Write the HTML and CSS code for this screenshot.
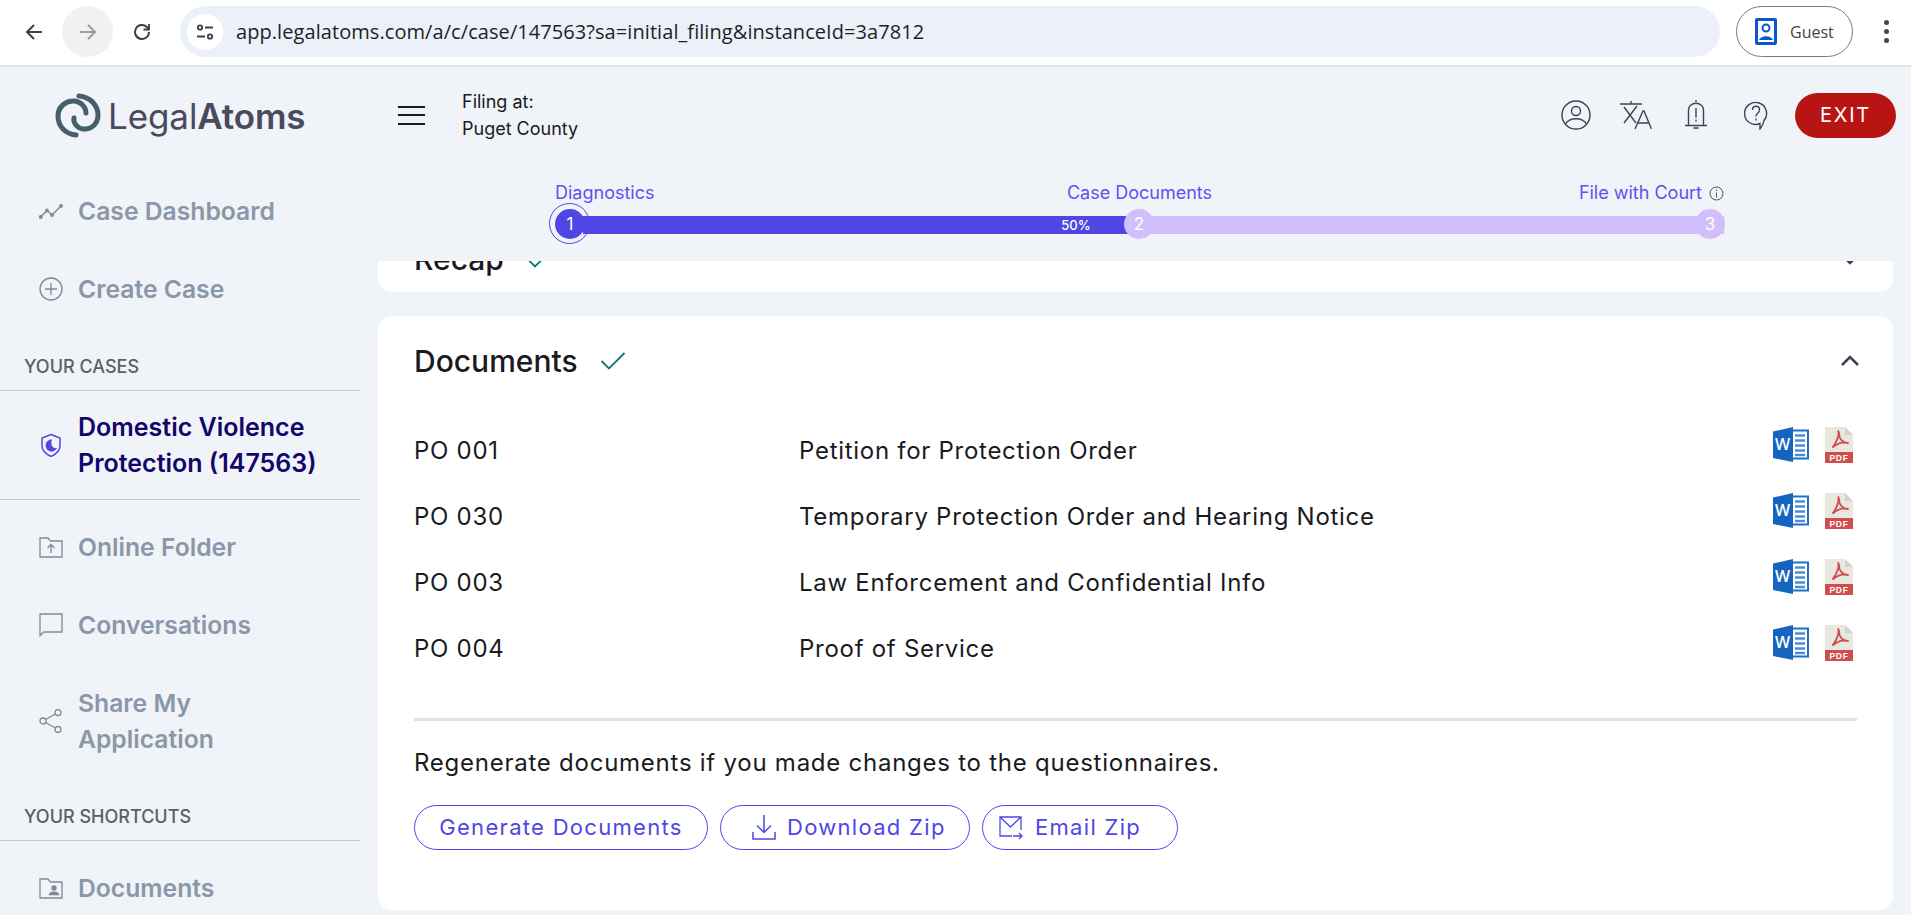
FILE: index.html
```html
<!DOCTYPE html>
<html>
<head>
	<meta charset="utf-8">
	<title>LegalAtoms</title>
	<link rel="stylesheet" href="styles.css">
</head>
<body>
	<div class="chrome">
		<button class="nav-btn">
			<svg width="22" height="22" viewBox="0 0 22 22" fill="none" stroke="#3c4043" stroke-width="2"><path d="M19 11H4M11 4l-7 7 7 7"/></svg>
		</button>
		<button class="nav-btn nav-off">
			<svg width="22" height="22" viewBox="0 0 22 22" fill="none" stroke="#9b9ea2" stroke-width="2"><path d="M3 11h15M11 4l7 7-7 7"/></svg>
		</button>
		<button class="nav-btn">
			<svg width="22" height="22" viewBox="0 0 22 22" fill="none" stroke="#3c4043" stroke-width="2"><path d="M18 11a7 7 0 1 1-2.200-5.100L18 8"/><path d="M18 3v5.500h-5.500" stroke-width="1.800"/></svg>
		</button>
		<div class="address">
			<span class="tune">
				<svg width="20" height="20" viewBox="0 0 20 20" fill="none" stroke="#3c4043" stroke-width="1.800"><circle cx="5" cy="5.500" r="2.200"/><path d="M10 5.500h8M2 14.500h8"/><circle cx="15" cy="14.500" r="2.200"/></svg>
			</span>
			<span class="url">app.legalatoms.com/a/c/case/147563?sa=initial_filing&amp;instanceId=3a7812</span>
		</div>
		<div class="guest">
			<svg width="22" height="27" viewBox="0 0 22 27"><rect width="22" height="27" rx="2" fill="#0b57d0"/><rect x="3" y="3" width="16" height="21" fill="#fff"/><circle cx="11" cy="10" r="3.500" fill="none" stroke="#0b57d0" stroke-width="2"/><path d="M4 22c2-5 12-5 14 0z" fill="#0b57d0"/></svg>
			<span>Guest</span>
		</div>
		<div class="dots"><i></i><i></i><i></i></div>
	</div>

	<div class="app">
		<aside class="sidebar">
			<div class="logo">
				<svg width="46" height="46" viewBox="0 0 46 46" fill="none" stroke="#45606b" stroke-width="5" stroke-linecap="round">
					<path d="M24 3c11 1 19 9 19 19 0 9-7 15-15 14-6-1-10-6-9-11"/>
					<path d="M21 42C10 41 3 33 3 23 3 14 11 7 20 8c6 1 11 6 11 12"/>
				</svg>
				<span class="logo-text">Legal<b>Atoms</b></span>
			</div>

			<a class="nav-item">
				<svg width="24" height="24" viewBox="0 0 24 24" fill="none" stroke="#7f8a99" stroke-width="1.500"><path d="M1.500 18 8 11.500l5 4.500 9-9"/><circle cx="1.800" cy="18" r="1.200" fill="#7f8a99"/><circle cx="8" cy="11.500" r="1.200" fill="#7f8a99"/><circle cx="13" cy="16" r="1.200" fill="#7f8a99"/><circle cx="22" cy="7" r="1.200" fill="#7f8a99"/></svg>
				<span>Case Dashboard</span>
			</a>
			<a class="nav-item">
				<svg width="24" height="24" viewBox="0 0 24 24" fill="none" stroke="#7f8a99" stroke-width="1.300"><circle cx="12" cy="12" r="11"/><path d="M12 6v12M6 12h12"/></svg>
				<span>Create Case</span>
			</a>

			<div class="nav-head">YOUR CASES</div>
			<a class="nav-item nav-active">
				<svg width="24" height="24" viewBox="0 0 24 24" fill="none" stroke="#4f46e5" stroke-width="1.500"><path d="M12 1.500 21 5v8c0 5-4 8-9 10.500C7 21 3 18 3 13V5z"/><path d="M13 6.500a6 6 0 1 0 5 8.500c-4 1-7-3-5-8.500z" fill="#4f46e5" stroke="none"/></svg>
				<span>Domestic Violence Protection (147563)</span>
			</a>

			<a class="nav-item nav-first">
				<svg width="24" height="24" viewBox="0 0 24 24" fill="none" stroke="#7f8a99" stroke-width="1.300"><path d="M1 3h8l2.500 3H23v16H1z"/><path d="M12 18v-8M8.500 13 12 9.500l3.500 3.500"/></svg>
				<span>Online Folder</span>
			</a>
			<a class="nav-item">
				<svg width="24" height="24" viewBox="0 0 24 24" fill="none" stroke="#7f8a99" stroke-width="1.300"><path d="M1 1h22v18H5l-4 3.500z"/></svg>
				<span>Conversations</span>
			</a>
			<a class="nav-item nav-tall">
				<svg width="24" height="24" viewBox="0 0 24 24" fill="none" stroke="#7f8a99" stroke-width="1.300"><circle cx="4" cy="12" r="3"/><circle cx="19" cy="3.500" r="3"/><circle cx="19" cy="20.500" r="3"/><path d="m6.600 10.500 9.800-5.500M6.600 13.500l9.800 5.500"/></svg>
				<span>Share My Application</span>
			</a>

			<div class="nav-head">YOUR SHORTCUTS</div>
			<a class="nav-item nav-first">
				<svg width="24" height="24" viewBox="0 0 24 24" fill="none" stroke="#7f8a99" stroke-width="1.300"><path d="M1 3h8l2.500 3H23v16H1z"/><circle cx="15" cy="12" r="2" fill="#7f8a99"/><path d="M10.500 18.500c1-3 8-3 9 0z" fill="#7f8a99"/></svg>
				<span>Documents</span>
			</a>
		</aside>

		<main class="content">
			<header class="topbar">
				<div class="burger"><i></i><i></i><i></i></div>
				<div class="filing">Filing at:<br>Puget County</div>
				<div class="top-icons">
					<svg width="30" height="30" viewBox="0 0 30 30" fill="none" stroke="#3f4254" stroke-width="1.400"><circle cx="15" cy="15" r="14"/><circle cx="15" cy="11" r="4.500"/><path d="M4.500 24c4-7 17-7 21 0"/></svg>
					<svg width="32" height="28" viewBox="0 0 32 28" fill="none" stroke="#3f4254" stroke-width="1.400"><path d="M0 3h22M11 0v3M4 6l12 16M17 5 4 22"/><path d="M15 28l8-18h1l7.500 18M18 22h11"/></svg>
					<svg width="24" height="30" viewBox="0 0 24 30" fill="none" stroke="#3f4254" stroke-width="1.400"><path d="M1 25.500h22M4.500 25.500V10c0-9 15-9 15 0v15.500"/><path d="M12 8v9.500M12 19.500v2" /><path d="M9.500 28h5M12 0v2"/></svg>
					<svg width="24" height="29" viewBox="0 0 24 29" fill="none" stroke="#3f4254" stroke-width="1.400"><path d="M16 28v-5.500A11 11 0 1 1 20 19.500c-.5 3-2 6-4 8.500z"/><path d="M8.500 9c0-5 7-5 7 0 0 3-3.500 3-3.500 6.500M12 17.500v2"/></svg>
				</div>
				<button class="exit">EXIT</button>
			</header>

			<div class="stepper">
				<div class="step-labels">
					<span>Diagnostics</span>
					<span class="step-mid">Case Documents</span>
					<span class="step-end">File with Court
						<svg width="15" height="15" viewBox="0 0 15 15" fill="none" stroke="#555" stroke-width="1"><circle cx="7.500" cy="7.500" r="6.500"/><path d="M7.500 6.500v5M7.500 3.500v1.500"/></svg>
					</span>
				</div>
				<div class="bar">
					<div class="ring"></div>
					<div class="track"><div class="fill" style="width:49.4%">50%</div></div>
					<div class="dot dot-one">1</div>
					<div class="dot dot-two">2</div>
					<div class="dot dot-three">3</div>
				</div>
			</div>

			<div class="pane">
				<section class="card card-recap">
					<div class="card-head">
						<h2>Recap</h2>
						<svg class="check" width="26" height="20" viewBox="0 0 26 20" fill="none" stroke="#0b7a75" stroke-width="1.800"><path d="M1.500 10 9 17.500 24.500 2"/></svg>
						<svg class="chevron" width="20" height="12" viewBox="0 0 20 12" fill="none" stroke="#3f4254" stroke-width="2.600"><path d="M2 2l8 8 8-8"/></svg>
					</div>
				</section>

				<section class="card">
					<div class="card-head">
						<h2>Documents</h2>
						<svg class="check" width="26" height="20" viewBox="0 0 26 20" fill="none" stroke="#0b7a75" stroke-width="1.800"><path d="M1.500 10 9 17.500 24.500 2"/></svg>
						<svg class="chevron" width="20" height="12" viewBox="0 0 20 12" fill="none" stroke="#3f4254" stroke-width="2.600"><path d="M2 10l8-8 8 8"/></svg>
					</div>

					<div class="doc-row">
						<span>PO 001</span>
						<span>Petition for Protection Order</span>
						<span class="doc-icons">
							<svg class="ic-word" viewBox="0 0 36 35"><rect x="12" y="3.500" width="23" height="28" fill="#fff" stroke="#1f6fc4" stroke-width="2"/><path d="M22 8.500h10M22 13.500h10M22 18.500h10M22 23.500h10M22 28h10" stroke="#4a8fd6" stroke-width="2.400"/><path d="M0 4.500 20 0v35L0 31z" fill="#1565c0"/><text x="10" y="23" text-anchor="middle" class="word-letter">W</text></svg>
							<svg class="ic-pdf" viewBox="0 0 28 36"><path d="M0 0h20l8 8v28H0z" fill="#e9e8e0"/><path d="M20 0l8 8h-8z" fill="#d4d3ca"/><path d="M0 25h28v11H0z" fill="#cf4d4d"/><path d="M13 3.500c1.500 3-.5 11-5.500 17 5-4 11-6 16-4.500-4 .5-8-3-9-6 0-2.500-.5-5-1.500-6.500z" fill="none" stroke="#cf4d4d" stroke-width="1.800"/><text x="14" y="34" text-anchor="middle" class="pdf-label">PDF</text></svg>
						</span>
					</div>
					<div class="doc-row">
						<span>PO 030</span>
						<span>Temporary Protection Order and Hearing Notice</span>
						<span class="doc-icons">
							<svg class="ic-word" viewBox="0 0 36 35"><rect x="12" y="3.500" width="23" height="28" fill="#fff" stroke="#1f6fc4" stroke-width="2"/><path d="M22 8.500h10M22 13.500h10M22 18.500h10M22 23.500h10M22 28h10" stroke="#4a8fd6" stroke-width="2.400"/><path d="M0 4.500 20 0v35L0 31z" fill="#1565c0"/><text x="10" y="23" text-anchor="middle" class="word-letter">W</text></svg>
							<svg class="ic-pdf" viewBox="0 0 28 36"><path d="M0 0h20l8 8v28H0z" fill="#e9e8e0"/><path d="M20 0l8 8h-8z" fill="#d4d3ca"/><path d="M0 25h28v11H0z" fill="#cf4d4d"/><path d="M13 3.500c1.500 3-.5 11-5.500 17 5-4 11-6 16-4.500-4 .5-8-3-9-6 0-2.500-.5-5-1.500-6.500z" fill="none" stroke="#cf4d4d" stroke-width="1.800"/><text x="14" y="34" text-anchor="middle" class="pdf-label">PDF</text></svg>
						</span>
					</div>
					<div class="doc-row">
						<span>PO 003</span>
						<span>Law Enforcement and Confidential Info</span>
						<span class="doc-icons">
							<svg class="ic-word" viewBox="0 0 36 35"><rect x="12" y="3.500" width="23" height="28" fill="#fff" stroke="#1f6fc4" stroke-width="2"/><path d="M22 8.500h10M22 13.500h10M22 18.500h10M22 23.500h10M22 28h10" stroke="#4a8fd6" stroke-width="2.400"/><path d="M0 4.500 20 0v35L0 31z" fill="#1565c0"/><text x="10" y="23" text-anchor="middle" class="word-letter">W</text></svg>
							<svg class="ic-pdf" viewBox="0 0 28 36"><path d="M0 0h20l8 8v28H0z" fill="#e9e8e0"/><path d="M20 0l8 8h-8z" fill="#d4d3ca"/><path d="M0 25h28v11H0z" fill="#cf4d4d"/><path d="M13 3.500c1.500 3-.5 11-5.500 17 5-4 11-6 16-4.500-4 .5-8-3-9-6 0-2.500-.5-5-1.500-6.500z" fill="none" stroke="#cf4d4d" stroke-width="1.800"/><text x="14" y="34" text-anchor="middle" class="pdf-label">PDF</text></svg>
						</span>
					</div>
					<div class="doc-row">
						<span>PO 004</span>
						<span>Proof of Service</span>
						<span class="doc-icons">
							<svg class="ic-word" viewBox="0 0 36 35"><rect x="12" y="3.500" width="23" height="28" fill="#fff" stroke="#1f6fc4" stroke-width="2"/><path d="M22 8.500h10M22 13.500h10M22 18.500h10M22 23.500h10M22 28h10" stroke="#4a8fd6" stroke-width="2.400"/><path d="M0 4.500 20 0v35L0 31z" fill="#1565c0"/><text x="10" y="23" text-anchor="middle" class="word-letter">W</text></svg>
							<svg class="ic-pdf" viewBox="0 0 28 36"><path d="M0 0h20l8 8v28H0z" fill="#e9e8e0"/><path d="M20 0l8 8h-8z" fill="#d4d3ca"/><path d="M0 25h28v11H0z" fill="#cf4d4d"/><path d="M13 3.500c1.500 3-.5 11-5.500 17 5-4 11-6 16-4.500-4 .5-8-3-9-6 0-2.500-.5-5-1.500-6.500z" fill="none" stroke="#cf4d4d" stroke-width="1.800"/><text x="14" y="34" text-anchor="middle" class="pdf-label">PDF</text></svg>
						</span>
					</div>

					<hr class="rule">
					<p class="regen">Regenerate documents if you made changes to the questionnaires.</p>
					<div class="actions">
						<button class="pill pill-gen">Generate Documents</button>
						<button class="pill pill-dl">
							<svg width="24" height="26" viewBox="0 0 24 26" fill="none" stroke="#4f46e5" stroke-width="1.500"><path d="M12 1v17M5 11.500l7 7 7-7M1 18v7h22v-7"/></svg>
							Download Zip
						</button>
						<button class="pill pill-mail">
							<svg width="24" height="26" viewBox="0 0 24 26" fill="none" stroke="#4f46e5" stroke-width="1.300"><path d="M13 22H1V3h21v13M1 3l10.500 10L22 3"/><path d="M14 22h9M20 19l3 3-3 3"/></svg>
							Email Zip
						</button>
					</div>
				</section>
			</div>
		</main>
	</div>
</body>
</html>
```

FILE: styles.css
```css
* {
	box-sizing: border-box;
}

html, body {
	height: 100%;
}

body {
	margin: 0;
	overflow: hidden;
	background: #f0f3f8;
	color: #1a1a22;
	font-family: "Inter", "Liberation Sans", sans-serif;
}

button {
	font-family: inherit;
	cursor: pointer;
}

.word-letter {
	font: 600 16px "Open Sans", sans-serif;
	fill: #fff;
}

.pdf-label {
	font: 700 8.500px "Liberation Sans", sans-serif;
	fill: #fff;
}

/* browser bar */
.chrome {
	display: flex;
	align-items: center;
	height: 67px;
	padding: 0 0 2px 8px;
	background: #fff;
	border-bottom: 2px solid #e1e3e6;
}

.nav-btn {
	display: flex;
	align-items: center;
	justify-content: center;
	width: 51px;
	height: 51px;
	padding: 0;
	margin-right: 3px;
	border: none;
	border-radius: 50%;
	background: none;
}

.nav-off {
	background: #f1f1f2;
}

.address {
	display: flex;
	align-items: center;
	width: 1540px;
	height: 51px;
	margin-left: 10px;
	padding-left: 7px;
	border-radius: 26px;
	background: #ebf0f9;
}

.tune {
	display: flex;
	align-items: center;
	justify-content: center;
	width: 36px;
	height: 36px;
	border-radius: 50%;
	background: #fff;
}

.url {
	margin-left: 13px;
	font: 20px "Open Sans", sans-serif;
	letter-spacing: .07px;
	color: #1f1f1f;
}

.guest {
	display: flex;
	align-items: center;
	gap: 13px;
	width: 117px;
	height: 51px;
	margin-left: 16px;
	padding-left: 18px;
	border: 1.500px solid #7b7b7b;
	border-radius: 26px;
	font: 16px "Open Sans", sans-serif;
	color: #444;
}

.dots {
	display: flex;
	flex-direction: column;
	gap: 4px;
	margin-left: 31px;
}

.dots i {
	width: 5px;
	height: 5px;
	border-radius: 50%;
	background: #44474a;
}

.app {
	display: flex;
	height: 848px;
}

/* left column */
.sidebar {
	flex: none;
	width: 378px;
	padding-right: 18px;
	overflow: hidden;
}

.logo {
	display: flex;
	align-items: center;
	gap: 7px;
	height: 105px;
	padding: 0 0 8px 55px;
}

.logo-text {
	font-size: 35px;
	font-weight: 400;
	letter-spacing: -.1px;
	color: #4a4a5e;
}

.logo-text b {
	font-weight: 600;
}

.nav-item {
	display: flex;
	align-items: center;
	gap: 15px;
	min-height: 78px;
	padding-left: 39px;
	font-size: 24.700px;
	font-weight: 600;
	line-height: 36px;
	color: #8a97a8;
}

.nav-item svg {
	flex: none;
}

.nav-active {
	height: 109px;
	padding-right: 20px;
	border-bottom: 1px solid #c7c9d0;
	font-size: 25px;
	color: #14056b;
}

.nav-first {
	margin-top: 8px;
}

.nav-tall {
	height: 114px;
	padding-right: 120px;
}

.nav-head {
	display: flex;
	align-items: flex-end;
	height: 63px;
	padding: 0 0 13px 24px;
	border-bottom: 1px solid #c7c9d0;
	font-size: 18px;
	font-weight: 500;
	color: #5c5f66;
}

/* right column */
.content {
	flex: 1;
	display: flex;
	flex-direction: column;
	min-width: 0;
}

.topbar {
	display: flex;
	align-items: center;
	flex: none;
	height: 96px;
	padding: 0 15px 0 20px;
}

.burger {
	display: flex;
	flex-direction: column;
	gap: 6.500px;
	width: 27px;
}

.burger i {
	height: 2px;
	background: #1a1a22;
}

.filing {
	margin-left: 37px;
	font-size: 18px;
	line-height: 27px;
	color: #1a1a22;
}

.top-icons {
	display: grid;
	grid-auto-flow: column;
	grid-auto-columns: 60px;
	justify-items: center;
	align-items: center;
	margin-left: auto;
}

.exit {
	width: 101px;
	height: 45px;
	margin-left: 9px;
	border: none;
	border-radius: 23px;
	background: #b91414;
	color: #fff;
	font-size: 20px;
	letter-spacing: 1.800px;
}

.stepper {
	flex: none;
	height: 98px;
	padding: 18px 187px 0 177px;
}

.step-labels {
	display: grid;
	grid-template-columns: 1fr auto 1fr;
	height: 24px;
	font-size: 18px;
	line-height: 24px;
	color: #5d52ee;
}

.step-end {
	display: flex;
	align-items: center;
	justify-content: flex-end;
	gap: 7px;
}

.bar {
	position: relative;
	height: 18px;
	margin: 11px 0 0 28px;
}

.track {
	position: relative;
	height: 18px;
	background: #d1bffc;
}

.fill {
	height: 18px;
	padding-right: 56px;
	background: #4f46e5;
	color: #fff;
	font-size: 13px;
	font-weight: 500;
	line-height: 18px;
	text-align: right;
}

.ring {
	position: absolute;
	left: -34px;
	top: -13px;
	width: 41px;
	height: 41px;
	border: 1px solid #4f46e5;
	border-radius: 50%;
}

.dot {
	position: absolute;
	top: -7px;
	width: 30px;
	height: 30px;
	border-radius: 50%;
	background: #d1bffc;
	color: #fff;
	font-size: 17px;
	line-height: 30px;
	text-align: center;
}

.dot-one {
	left: -28px;
	background: #4f46e5;
}

.dot-two {
	left: 541px;
}

.dot-three {
	right: -1px;
}

.pane {
	flex: 1;
	min-height: 0;
	padding-right: 18px;
	overflow: hidden;
}

.card {
	padding: 0 36px;
	margin-bottom: 24px;
	border-radius: 14px;
	background: #fff;
}

/* scrolled so only the bottom of this card is showing */
.card-recap {
	height: 78px;
	margin-top: -47px;
	overflow: hidden;
}

.card-head {
	display: flex;
	align-items: center;
	height: 102px;
	padding-bottom: 12px;
}

.card-head h2 {
	margin: 0;
	font-size: 30px;
	font-weight: 500;
	color: #1a1a22;
}

.check {
	margin-left: 22px;
}

.chevron {
	margin-left: auto;
	margin-right: -3px;
}

.doc-row {
	display: grid;
	grid-template-columns: 385px 1fr auto;
	align-items: center;
	height: 66px;
	padding-bottom: 1px;
	font-size: 24px;
	letter-spacing: .72px;
}

.doc-icons {
	display: flex;
	gap: 16px;
	margin-right: 4px;
	padding-bottom: 11px;
}

.ic-word {
	width: 36px;
	height: 35px;
}

.ic-pdf {
	width: 28px;
	height: 36px;
}

.rule {
	height: 3px;
	margin: 36px 0 0;
	border: none;
	background: #e2e1ee;
}

.regen {
	margin: 28px 0 0;
	font-size: 24px;
	line-height: 28px;
	letter-spacing: .75px;
}

.actions {
	display: flex;
	gap: 12px;
	margin-top: 28px;
	padding-bottom: 60px;
}

.pill {
	display: flex;
	align-items: center;
	justify-content: center;
	height: 45px;
	padding: 0 0 2px;
	border: 1px solid #4f46e5;
	border-radius: 23px;
	background: #fff;
	color: #4f46e5;
	font-size: 22px;
	letter-spacing: 1.300px;
}

.pill-gen {
	width: 294px;
}

.pill-dl {
	justify-content: flex-start;
	width: 250px;
	padding-left: 31px;
	gap: 11px;
}

.pill-mail {
	justify-content: flex-start;
	width: 196px;
	padding-left: 16px;
	gap: 12px;
}
```
